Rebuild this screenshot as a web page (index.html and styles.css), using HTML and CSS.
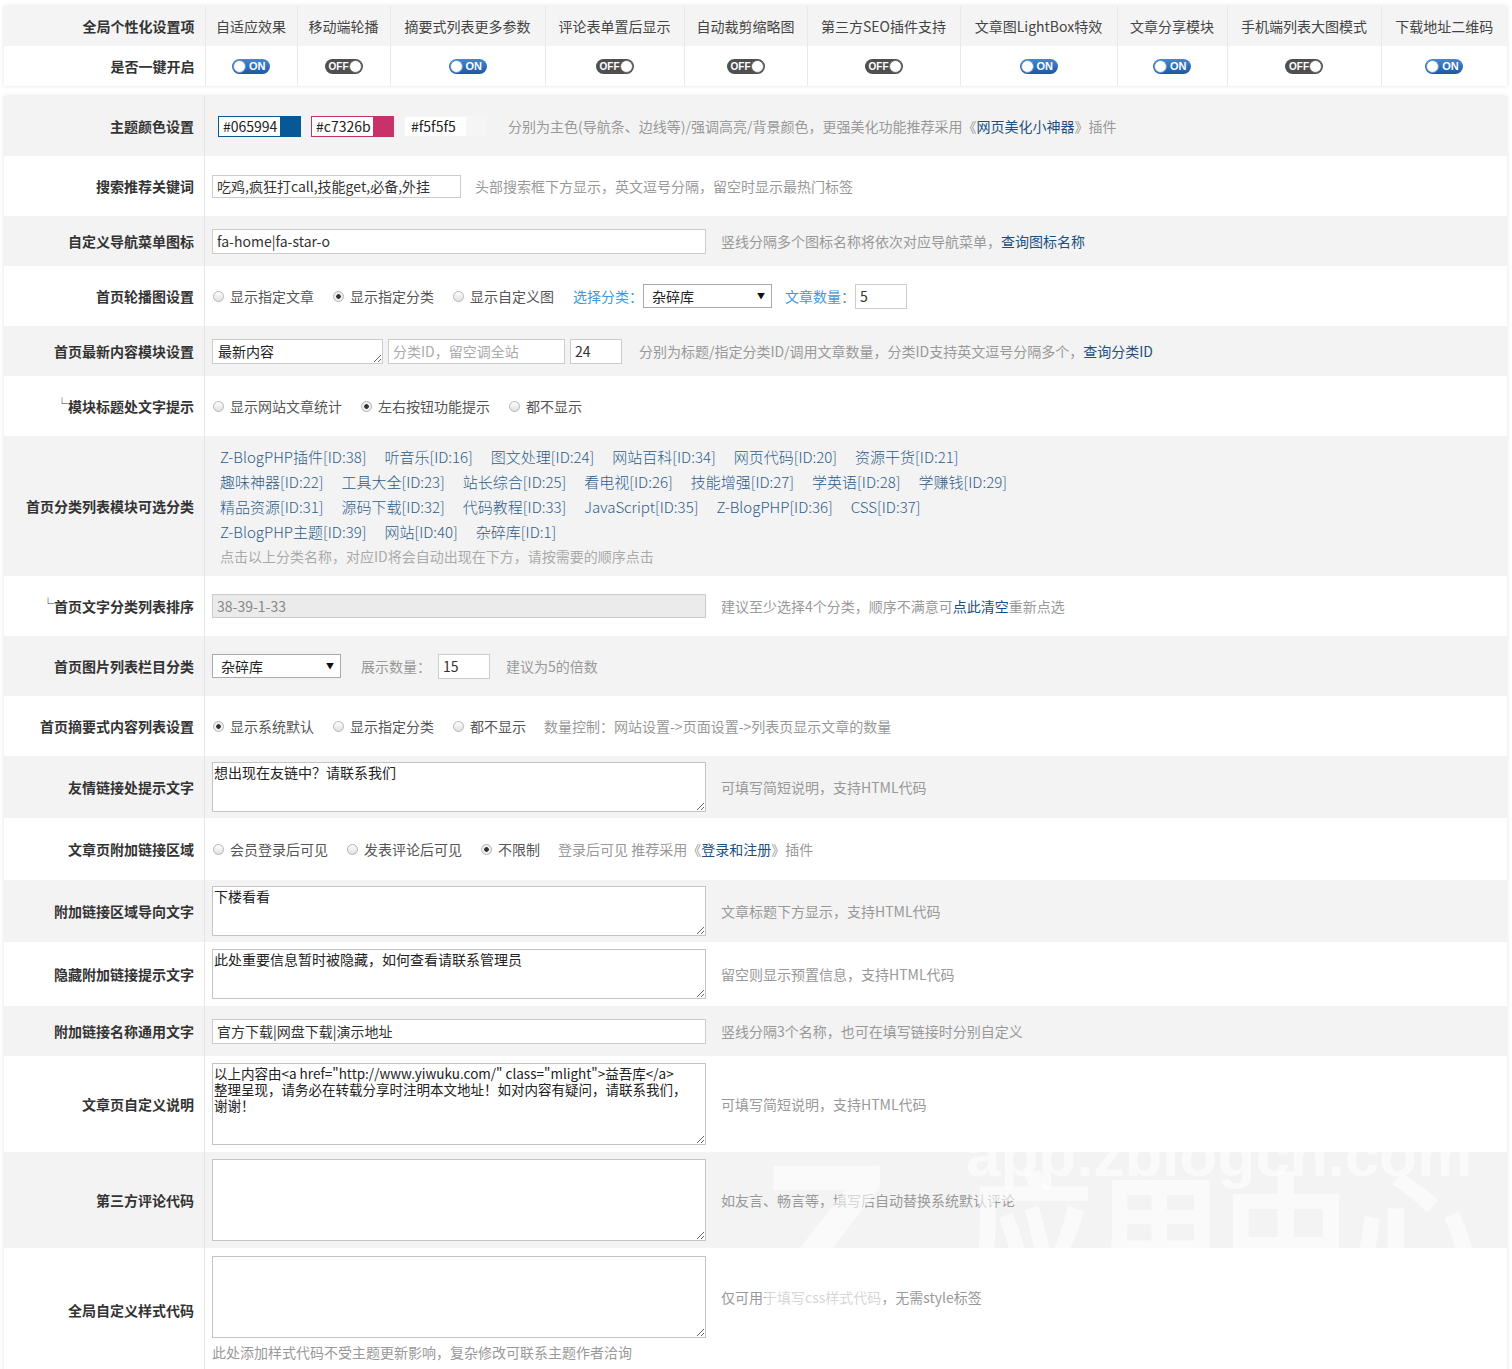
FILE: index.html
```html
<!DOCTYPE html>
<html lang="zh-CN">
<head>
<meta charset="utf-8">
<title>主题设置</title>
<link rel="stylesheet" href="styles.css">
</head>
<body>
<table class="switches">
  <colgroup>
    <col class="w201"><col class="w92"><col class="w93"><col class="w155"><col class="w139"><col class="w123"><col class="w153"><col class="w157"><col class="w110"><col class="w154"><col class="w126">
  </colgroup>
  <tr class="head">
    <th class="lbl">全局个性化设置项</th>
    <th>自适应效果</th>
    <th>移动端轮播</th>
    <th>摘要式列表更多参数</th>
    <th>评论表单置后显示</th>
    <th>自动裁剪缩略图</th>
    <th>第三方SEO插件支持</th>
    <th>文章图LightBox特效</th>
    <th>文章分享模块</th>
    <th>手机端列表大图模式</th>
    <th>下载地址二维码</th>
  </tr>
  <tr>
    <th class="lbl">是否一键开启</th>
    <td><span class="tg on"><i class="knob"></i><b>ON</b></span></td>
    <td><span class="tg off"><b>OFF</b><i class="knob"></i></span></td>
    <td><span class="tg on"><i class="knob"></i><b>ON</b></span></td>
    <td><span class="tg off"><b>OFF</b><i class="knob"></i></span></td>
    <td><span class="tg off"><b>OFF</b><i class="knob"></i></span></td>
    <td><span class="tg off"><b>OFF</b><i class="knob"></i></span></td>
    <td><span class="tg on"><i class="knob"></i><b>ON</b></span></td>
    <td><span class="tg on"><i class="knob"></i><b>ON</b></span></td>
    <td><span class="tg off"><b>OFF</b><i class="knob"></i></span></td>
    <td><span class="tg on"><i class="knob"></i><b>ON</b></span></td>
  </tr>
</table>

<div class="settings">
  <div class="row h60">
    <div class="lbl">主题颜色设置</div>
    <div class="val">
      <span class="color c-main"><input class="color-text" value="#065994"><i class="swatch"></i></span>
      <span class="color c-hi"><input class="color-text" value="#c7326b"><i class="swatch"></i></span>
      <span class="color c-bg"><input class="color-text" value="#f5f5f5"><i class="swatch"></i></span>
      <span class="hint hint-color">分别为主色(导航条、边线等)/强调高亮/背景颜色，更强美化功能推荐采用《<a class="link">网页美化小神器</a>》插件</span>
    </div>
  </div>

  <div class="row h60">
    <div class="lbl">搜索推荐关键词</div>
    <div class="val">
      <input class="inp w249 ht23" value="吃鸡,疯狂打call,技能get,必备,外挂">
      <span class="hint gap14">头部搜索框下方显示，英文逗号分隔，留空时显示最热门标签</span>
    </div>
  </div>

  <div class="row h50">
    <div class="lbl">自定义导航菜单图标</div>
    <div class="val">
      <input class="inp w494" value="fa-home|fa-star-o">
      <span class="hint gap15">竖线分隔多个图标名称将依次对应导航菜单，<a class="link">查询图标名称</a></span>
    </div>
  </div>

  <div class="row h60">
    <div class="lbl">首页轮播图设置</div>
    <div class="val">
      <label class="radio"><input type="radio" name="slide">显示指定文章</label>
      <label class="radio"><input type="radio" name="slide" checked>显示指定分类</label>
      <label class="radio r-last"><input type="radio" name="slide">显示自定义图</label>
      <span class="blue-lbl">选择分类：</span>
      <span class="sel"><select><option>杂碎库</option></select></span>
      <span class="blue-lbl gap13">文章数量：</span>
      <input class="inp w52" value="5">
    </div>
  </div>

  <div class="row h50">
    <div class="lbl">首页最新内容模块设置</div>
    <div class="val">
      <textarea class="ta-one">最新内容</textarea>
      <input class="inp w177 gap5" placeholder="分类ID，留空调全站">
      <input class="inp w52 gap5" value="24">
      <span class="hint gap17">分别为标题/指定分类ID/调用文章数量，分类ID支持英文逗号分隔多个，<a class="link">查询分类ID</a></span>
    </div>
  </div>

  <div class="row h60">
    <div class="lbl"><span class="corner">└</span>模块标题处文字提示</div>
    <div class="val">
      <label class="radio"><input type="radio" name="tip">显示网站文章统计</label>
      <label class="radio"><input type="radio" name="tip" checked>左右按钮功能提示</label>
      <label class="radio"><input type="radio" name="tip">都不显示</label>
    </div>
  </div>

  <div class="row h140">
    <div class="lbl">首页分类列表模块可选分类</div>
    <div class="val cats">
      <div class="cat-line"><a class="cat">Z-BlogPHP插件[ID:38]</a><a class="cat">听音乐[ID:16]</a><a class="cat">图文处理[ID:24]</a><a class="cat">网站百科[ID:34]</a><a class="cat">网页代码[ID:20]</a><a class="cat">资源干货[ID:21]</a></div>
      <div class="cat-line"><a class="cat">趣味神器[ID:22]</a><a class="cat">工具大全[ID:23]</a><a class="cat">站长综合[ID:25]</a><a class="cat">看电视[ID:26]</a><a class="cat">技能增强[ID:27]</a><a class="cat">学英语[ID:28]</a><a class="cat">学赚钱[ID:29]</a></div>
      <div class="cat-line"><a class="cat">精品资源[ID:31]</a><a class="cat">源码下载[ID:32]</a><a class="cat">代码教程[ID:33]</a><a class="cat">JavaScript[ID:35]</a><a class="cat">Z-BlogPHP[ID:36]</a><a class="cat">CSS[ID:37]</a></div>
      <div class="cat-line"><a class="cat">Z-BlogPHP主题[ID:39]</a><a class="cat">网站[ID:40]</a><a class="cat">杂碎库[ID:1]</a></div>
      <div class="cat-line cat-note">点击以上分类名称，对应ID将会自动出现在下方，请按需要的顺序点击</div>
    </div>
  </div>

  <div class="row h60">
    <div class="lbl"><span class="corner">└</span>首页文字分类列表排序</div>
    <div class="val">
      <input class="inp w494 dis" value="38-39-1-33" disabled>
      <span class="hint gap15">建议至少选择4个分类，顺序不满意可<a class="link">点此清空</a>重新点选</span>
    </div>
  </div>

  <div class="row h60">
    <div class="lbl">首页图片列表栏目分类</div>
    <div class="val">
      <span class="sel"><select><option>杂碎库</option></select></span>
      <span class="hint gap20">展示数量：</span>
      <input class="inp w52 gap7" value="15">
      <span class="hint gap16">建议为5的倍数</span>
    </div>
  </div>

  <div class="row h60">
    <div class="lbl">首页摘要式内容列表设置</div>
    <div class="val">
      <label class="radio"><input type="radio" name="sum" checked>显示系统默认</label>
      <label class="radio"><input type="radio" name="sum">显示指定分类</label>
      <label class="radio"><input type="radio" name="sum">都不显示</label>
      <span class="hint">数量控制：网站设置-&gt;页面设置-&gt;列表页显示文章的数量</span>
    </div>
  </div>

  <div class="row h62">
    <div class="lbl">友情链接处提示文字</div>
    <div class="val">
      <textarea class="ta ta50">想出现在友链中？请联系我们</textarea>
      <span class="hint gap15">可填写简短说明，支持HTML代码</span>
    </div>
  </div>

  <div class="row h62">
    <div class="lbl">文章页附加链接区域</div>
    <div class="val">
      <label class="radio"><input type="radio" name="extra">会员登录后可见</label>
      <label class="radio"><input type="radio" name="extra">发表评论后可见</label>
      <label class="radio"><input type="radio" name="extra" checked>不限制</label>
      <span class="hint">登录后可见 推荐采用《<a class="link">登录和注册</a>》插件</span>
    </div>
  </div>

  <div class="row h62">
    <div class="lbl">附加链接区域导向文字</div>
    <div class="val">
      <textarea class="ta ta50">下楼看看</textarea>
      <span class="hint gap15">文章标题下方显示，支持HTML代码</span>
    </div>
  </div>

  <div class="row h64">
    <div class="lbl">隐藏附加链接提示文字</div>
    <div class="val">
      <textarea class="ta ta50">此处重要信息暂时被隐藏，如何查看请联系管理员</textarea>
      <span class="hint gap15">留空则显示预置信息，支持HTML代码</span>
    </div>
  </div>

  <div class="row h50">
    <div class="lbl">附加链接名称通用文字</div>
    <div class="val">
      <input class="inp w494" value="官方下载|网盘下载|演示地址">
      <span class="hint gap15">竖线分隔3个名称，也可在填写链接时分别自定义</span>
    </div>
  </div>

  <div class="row h96">
    <div class="lbl">文章页自定义说明</div>
    <div class="val">
      <textarea class="ta ta81 pre">以上内容由&lt;a href="http://www.yiwuku.com/" class="mlight"&gt;益吾库&lt;/a&gt;
整理呈现，请务必在转载分享时注明本文地址！如对内容有疑问，请联系我们，
谢谢！</textarea>
      <span class="hint gap15">可填写简短说明，支持HTML代码</span>
    </div>
  </div>

  <div class="row h96">
    <div class="lbl">第三方评论代码</div>
    <div class="val">
      <textarea class="ta ta81"></textarea>
      <span class="hint gap15">如友言、畅言等，填写后自动替换系统默认评论</span>
    </div>
  </div>

  <div class="row h124">
    <div class="lbl">全局自定义样式代码</div>
    <div class="val stack">
      <div class="ta-line">
        <textarea class="ta ta81"></textarea>
        <span class="hint gap15">仅可用于填写css样式代码，无需style标签</span>
      </div>
      <div class="note">此处添加样式代码不受主题更新影响，复杂修改可联系主题作者洽询</div>
    </div>
  </div>

  <div class="watermark" aria-hidden="true">
    <span class="wm-z">Z</span>
    <span class="wm-url">app.zblogcn.com</span>
    <span class="wm-cn">应用中心</span>
  </div>
</div>
</body>
</html>
```

FILE: styles.css
```css
* { box-sizing: border-box; }

body {
  margin: 0;
  padding: 6px 5px 0 4px;
  background: #fff;
  font-family: "Noto Sans CJK SC", "Noto Sans", sans-serif;
  font-size: 14px;
  color: #333;
}

/* ---------- top switch table ---------- */
.switches {
  width: 1503px;
  border-collapse: collapse;
  table-layout: fixed;
  box-shadow: 0 0 4px rgba(0, 0, 0, 0.12);
}
.w201 { width: 201px; } .w92 { width: 92px; } .w93 { width: 93px; }
.w155 { width: 155px; } .w139 { width: 139px; } .w123 { width: 123px; }
.w153 { width: 153px; } .w157 { width: 157px; } .w110 { width: 110px; }
.w154 { width: 154px; } .w126 { width: 126px; }

.switches th,
.switches td {
  height: 40px;
  padding: 0;
  text-align: center;
  font-weight: normal;
  color: #444;
  white-space: nowrap;
  border-left: 1px solid #e9e9e9;
}
.switches .head { background: #f4f4f4; }
.switches .lbl {
  text-align: right;
  padding-right: 10px;
  font-weight: bold;
  color: #333;
  border-left: 0;
}

.tg {
  display: inline-flex;
  align-items: center;
  vertical-align: middle;
  width: 38px;
  height: 15px;
  margin-top: -3px;
  border-radius: 8px;
  padding: 0 1px;
  font-family: "Liberation Sans", sans-serif;
  font-size: 11px;
  font-weight: bold;
  color: #fff;
}
.tg b { font-weight: bold; line-height: 15px; }
.tg.on {
  background: linear-gradient(#4389d8, #1a58a3);
}
.tg.on b { margin-left: 3px; }
.tg.off {
  background: #4f4f4f;
  padding-left: 4px;
  justify-content: space-between;
  font-size: 10px;
}
.knob {
  width: 13px;
  height: 13px;
  border-radius: 50%;
  background: radial-gradient(circle at 40% 35%, #fff 55%, #e4e4e4);
  border: 1px solid #6f93c2;
}
.tg.off .knob { border-color: #6a6a6a; }

/* ---------- settings list ---------- */
.settings {
  position: relative;
  width: 1503px;
  margin-top: 10px;
  box-shadow: 0 0 4px rgba(0, 0, 0, 0.12);
  overflow: hidden;
}
.row {
  display: grid;
  grid-template-columns: 201px 1fr;
}
.row:nth-child(odd) { background: #f3f3f3; }
.h50 { height: 50px; } .h60 { height: 60px; } .h62 { height: 62px; }
.h64 { height: 64px; } .h96 { height: 96px; } .h124 { height: 124px; }
.h140 { height: 140px; }

.row .lbl {
  display: flex;
  align-items: center;
  justify-content: flex-end;
  padding-right: 10px;
  font-weight: bold;
  color: #333;
  white-space: nowrap;
  border-right: 1px solid #e5e5e5;
}
.corner { font-weight: normal; font-size: 12px; margin-top: -6px; }

.row .val {
  display: flex;
  align-items: center;
  padding-left: 7px;
  white-space: nowrap;
}

.hint { color: #999; }
.link { color: #1d4f80; text-decoration: none; }
.blue-lbl { color: #3e9ad6; }

.gap5 { margin-left: 5px; } .gap7 { margin-left: 7px; }
.gap13 { margin-left: 13px; } .gap14 { margin-left: 14px; }
.gap15 { margin-left: 15px; } .gap16 { margin-left: 16px; }
.gap17 { margin-left: 17px; } .gap20 { margin-left: 20px; }

/* inputs */
.inp {
  height: 25px;
  border: 1px solid #ccc;
  padding: 0 4px;
  font: inherit;
  font-size: 14px;
  color: #333;
  background: #fff;
  outline: none;
}
.inp::placeholder { color: #aaa; }
.w249 { width: 249px; } .w494 { width: 494px; } .w52 { width: 52px; }
.w177 { width: 177px; }
.ht23 { height: 23px; }
.inp.dis { background: #ebebeb; color: #888; height: 24px; }

/* colour pickers */
.color {
  display: inline-flex;
  height: 21px;
  border: 1px solid;
  margin-right: 10px;
}
.color:first-child { margin-left: 6px; }
.color-text {
  width: 61px;
  border: 0;
  padding: 0 0 0 4px;
  font: inherit;
  font-size: 14px;
  color: #222;
  background: #fff;
  outline: none;
}
.swatch { width: 20px; }
.c-main { border-color: #065994; }
.c-main .swatch { background: #065994; }
.c-hi { border-color: #c7326b; }
.c-hi .swatch { background: #c7326b; }
.c-bg { border-color: #f5f5f5; margin-right: 0; }
.c-bg .color-text { padding-left: 6px; }
.c-bg .swatch { background: #f5f5f5; }
.hint-color { margin-left: 21px; }

/* radios */
.radio {
  display: inline-flex;
  align-items: center;
  margin-right: 18px;
  color: #555;
}
.radio.r-last { margin-right: 19px; }
.radio input {
  appearance: none;
  -webkit-appearance: none;
  width: 11px;
  height: 11px;
  margin: 0 6px 0 1px;
  border: 1px solid #b4b4b4;
  border-radius: 50%;
  background: linear-gradient(#fff, #e0e0e0);
}
.radio input:checked {
  background: radial-gradient(circle, #333 0 2px, #f4f4f4 2.6px, #e0e0e0);
}

/* select */
.sel {
  position: relative;
  display: inline-block;
}
.sel select {
  appearance: none;
  -webkit-appearance: none;
  width: 129px;
  height: 24px;
  border: 1px solid #aaa;
  border-radius: 0;
  padding: 0 0 0 8px;
  background: #fff;
  font: inherit;
  font-size: 14px;
  color: #222;
}
.sel::after {
  content: "▼";
  position: absolute;
  right: 7px;
  top: 6px;
  font-size: 8px;
  color: #111;
  pointer-events: none;
}

/* textareas */
.ta-one {
  width: 171px;
  height: 25px;
  border: 1px solid #ccc;
  padding: 1px 5px;
  font: inherit;
  font-size: 14px;
  line-height: 20px;
  color: #222;
  resize: both;
  overflow: hidden;
}
.ta {
  width: 494px;
  border: 1px solid #c4c4c4;
  padding: 1px;
  font-family: "Noto Sans CJK SC", sans-serif;
  font-size: 14px;
  line-height: 16px;
  color: #222;
  background: #fff;
}
.ta50 { height: 50px; }
.ta81 { height: 82px; }
.ta.pre { white-space: pre; overflow: hidden; font-size: 13.5px; }

/* categories */
.val.cats {
  flex-direction: column;
  align-items: flex-start;
  justify-content: center;
  padding-left: 15px;
}
.cat-line { line-height: 25px; height: 25px; font-size: 15px; }
.cat {
  font-weight: 300;
  color: #2e5d8c;
  margin-right: 18px;
  text-decoration: none;
}
.cat-note { color: #aaa; font-size: 14px; }

/* stacked value */
.val.stack {
  flex-direction: column;
  align-items: flex-start;
  justify-content: flex-start;
  padding-top: 8px;
}
.ta-line { display: flex; align-items: center; }
.note { color: #999; line-height: 28px; }

/* watermark */
.watermark {
  position: absolute;
  left: 0;
  top: 0;
  width: 100%;
  height: 100%;
  pointer-events: none;
  color: rgba(255, 255, 255, 0.6);
  font-weight: bold;
}
.watermark span { position: absolute; line-height: 1; white-space: nowrap; }
.wm-z {
  left: 755px;
  top: 1036px;
  font-family: "Liberation Sans", sans-serif;
  font-size: 215px;
}
.wm-url {
  left: 962px;
  top: 1028px;
  font-family: "Liberation Sans", sans-serif;
  font-size: 62px;
}
.wm-cn {
  left: 962px;
  top: 1066px;
  font-family: "Noto Sans CJK SC", sans-serif;
  font-size: 128px;
}
```
